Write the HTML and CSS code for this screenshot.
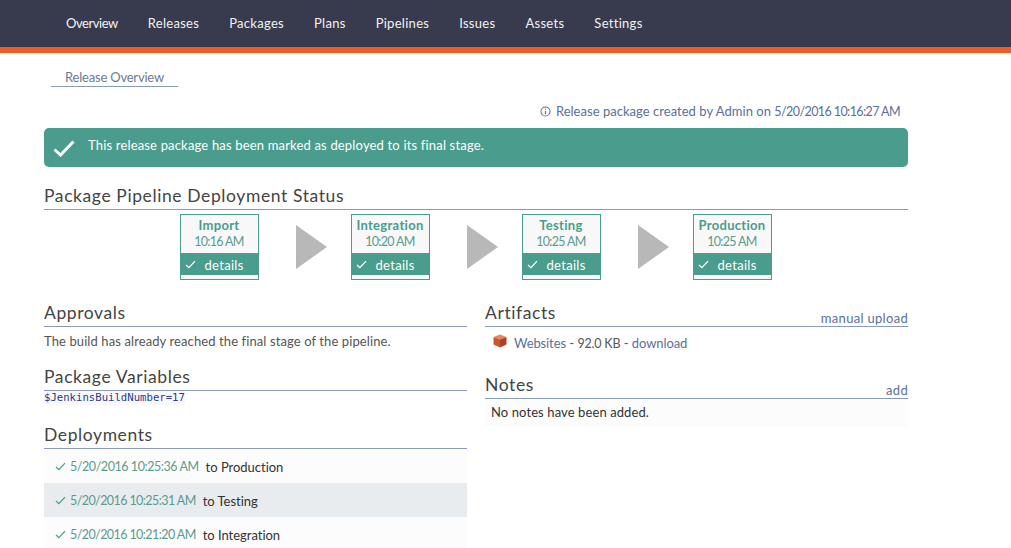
FILE: index.html
```html
<!DOCTYPE html>
<html lang="en">
<head>
<meta charset="utf-8">
<title>Release Overview</title>
<link rel="stylesheet" href="styles.css">
</head>
<body>
<nav class="topnav">
  <a href="#" class="nav-overview">Overview</a>
  <a href="#">Releases</a>
  <a href="#">Packages</a>
  <a href="#">Plans</a>
  <a href="#">Pipelines</a>
  <a href="#">Issues</a>
  <a href="#">Assets</a>
  <a href="#">Settings</a>
</nav>
<main class="page">
  <div class="tabs"><a href="#" class="tab">Release Overview</a></div>
  <p class="created">
    <svg class="info" viewBox="0 0 12 12" width="11" height="11"><circle cx="6" cy="6" r="5" fill="none" stroke="#5a6f99" stroke-width="1.1"/><path d="M6 3v1.2M6 5.4V9" stroke="#5a6f99" stroke-width="1.4" fill="none"/></svg>
    <span>Release package created by <a href="#">Admin</a> on <span class="date">5/20/2016 10:16:27 AM</span></span>
  </p>
  <div class="banner">
    <svg class="banner-check" viewBox="0 0 22 17" width="22" height="17"><path d="M1.5 9.5 L7.5 15 L20.5 1.5" fill="none" stroke="#fff" stroke-width="3"/></svg>
    <span>This release package has been marked as deployed to its final stage.</span>
  </div>
  <h2 class="heading pipeline-heading">Package Pipeline Deployment Status</h2>
  <div class="pipeline">
    <div class="stage">
      <div class="stage-name">Import</div><div class="stage-time">10:16 AM</div>
      <a href="#" class="stage-link"><svg viewBox="0 0 12 10" width="11" height="9"><path d="M1 5.5 L4.2 8.5 L11 1.2" fill="none" stroke="#fff" stroke-width="1.4"/></svg><span>details</span></a>
    </div>
    <div class="arrow"></div>
    <div class="stage">
      <div class="stage-name">Integration</div><div class="stage-time">10:20 AM</div>
      <a href="#" class="stage-link"><svg viewBox="0 0 12 10" width="11" height="9"><path d="M1 5.5 L4.2 8.5 L11 1.2" fill="none" stroke="#fff" stroke-width="1.4"/></svg><span>details</span></a>
    </div>
    <div class="arrow"></div>
    <div class="stage">
      <div class="stage-name">Testing</div><div class="stage-time">10:25 AM</div>
      <a href="#" class="stage-link"><svg viewBox="0 0 12 10" width="11" height="9"><path d="M1 5.5 L4.2 8.5 L11 1.2" fill="none" stroke="#fff" stroke-width="1.4"/></svg><span>details</span></a>
    </div>
    <div class="arrow"></div>
    <div class="stage">
      <div class="stage-name">Production</div><div class="stage-time">10:25 AM</div>
      <a href="#" class="stage-link"><svg viewBox="0 0 12 10" width="11" height="9"><path d="M1 5.5 L4.2 8.5 L11 1.2" fill="none" stroke="#fff" stroke-width="1.4"/></svg><span>details</span></a>
    </div>
  </div>
  <div class="columns">
    <section class="col">
      <h2 class="heading">Approvals</h2>
      <p class="approval-text">The build has already reached the final stage of the pipeline.</p>
      <h2 class="heading vars-heading">Package Variables</h2>
      <div class="vars"><code>$JenkinsBuildNumber=17</code></div>
      <h2 class="heading deploy-heading">Deployments</h2>
      <ul class="deploys">
        <li><svg viewBox="0 0 12 10" width="11" height="9"><path d="M1 5.5 L4.2 8.5 L11 1.2" fill="none" stroke="#4a9c8c" stroke-width="1.4"/></svg><a href="#" class="when date">5/20/2016 10:25:36 AM</a><span>to Production</span></li>
        <li class="alt"><svg viewBox="0 0 12 10" width="11" height="9"><path d="M1 5.5 L4.2 8.5 L11 1.2" fill="none" stroke="#4a9c8c" stroke-width="1.4"/></svg><a href="#" class="when date narrow">5/20/2016 10:25:31 AM</a><span>to Testing</span></li>
        <li><svg viewBox="0 0 12 10" width="11" height="9"><path d="M1 5.5 L4.2 8.5 L11 1.2" fill="none" stroke="#4a9c8c" stroke-width="1.4"/></svg><a href="#" class="when date narrow">5/20/2016 10:21:20 AM</a><span>to Integration</span></li>
      </ul>
    </section>
    <section class="col">
      <div class="heading heading-row"><h2>Artifacts</h2><a href="#">manual upload</a></div>
      <div class="artifact">
        <svg class="box" viewBox="0 0 14 14" width="14" height="14"><path d="M7 0.5 L13.5 3 L7 5.5 L0.5 3Z" fill="#e8875c"/><path d="M0.5 3 L7 5.5 V13.5 L0.5 10.5Z" fill="#c9562c"/><path d="M13.5 3 L7 5.5 V13.5 L13.5 10.5Z" fill="#a8441f"/></svg>
        <span><a href="#">Websites</a> - <span class="size">92.0 KB</span> - <a href="#">download</a></span>
      </div>
      <div class="heading heading-row notes-heading"><h2>Notes</h2><a href="#">add</a></div>
      <p class="notes">No notes have been added.</p>
    </section>
  </div>
</main>
</body>
</html>
```
FILE: styles.css
```css
* { box-sizing: border-box; }
html, body { margin: 0; height: 548px; overflow: hidden; }
body { background: #fff; color: #4a4a4a; font-family: "Lato", "Liberation Sans", sans-serif; font-size: 13px; letter-spacing: 0.1px; }
a { color: #5a6f99; text-decoration: none; }
h2, p, ul { margin: 0; padding: 0; }

.date { font-size: 12.5px; letter-spacing: -0.44px; }

.topnav { height: 53px; background: #383a4e; border-bottom: 6px solid #f15a29; display: flex; gap: 30px; padding: 16px 0 0 66px; letter-spacing: 0.29px; }
.topnav a { color: #f2f2f2; line-height: 15px; height: 15px; }
.topnav .nav-overview { letter-spacing: -0.45px; }

.page { padding: 0 103px 0 44px; }
.tabs { padding: 16px 0 0 7px; }
.tab { display: block; width: 127px; height: 18px; border-bottom: 1px solid #8a9bb5; padding: 1px 0 0 14px; line-height: 15px; letter-spacing: -0.2px; color: #6b7a99; }

.created { display: flex; justify-content: flex-end; align-items: center; gap: 5px; height: 16px; margin: 16px 8px 0 0; color: #5a6f99; letter-spacing: 0.03px; }
.created .info { flex: none; }
.created .date { letter-spacing: -0.58px; }

.banner { height: 39px; margin-top: 9px; background: #4a9c8c; border-radius: 5px; color: #fff; display: flex; align-items: center; padding: 0 0 6px 9px; gap: 13px; letter-spacing: 0.17px; }
.banner-check { flex: none; margin-top: 8px; }

.heading { border-bottom: 1px solid #8a9bb5; font-size: 17.5px; font-weight: 400; line-height: 24px; height: 26px; color: #444; letter-spacing: 0.6px; }
.pipeline-heading { margin-top: 17px; }

.pipeline { display: flex; justify-content: center; align-items: center; margin-top: 4px; padding-right: 1px; letter-spacing: 0.3px; }
.stage { width: 79px; height: 66px; border: 1px solid #4a9c8c; background: #f8f8f8; text-align: center; }
.stage-name { color: #4a9c8c; font-weight: 700; line-height: 18px; padding-top: 1px; height: 18px; }
.stage-time { color: #5c9a8d; font-size: 12.5px; letter-spacing: -0.68px; line-height: 18px; height: 20px; }
.stage-link { display: flex; align-items: center; height: 22px; background: #4a9c8c; color: #fff; padding: 1px 0 0 4px; gap: 9px; }
.arrow { width: 31px; height: 44px; margin: 0 24px 0 37px; border-left: 31px solid #b8b8b8; border-top: 22px solid transparent; border-bottom: 22px solid transparent; }

.columns { display: flex; gap: 18px; margin-top: 21px; }
.col { width: 423px; }
.col .heading { line-height: 23px; }
.heading-row { display: flex; justify-content: space-between; align-items: flex-end; }
.heading-row h2 { font: inherit; letter-spacing: inherit; align-self: flex-start; }
.heading-row a { font-size: 13px; letter-spacing: 0.3px; line-height: 16px; }

.approval-text { line-height: 16px; margin-top: 6px; color: #555; }
.vars-heading { margin-top: 16px; }
.vars { line-height: 14px; height: 14px; }
.vars code { display: inline-block; font-family: "DejaVu Sans Mono", monospace; font-size: 10.65px; line-height: 14px; letter-spacing: 0; color: #2b3a8c; background: #f8f8f8; vertical-align: top; }
.deploy-heading { margin-top: 18px; }
.deploys { list-style: none; }
.deploys li { height: 34px; background: #fcfcfc; display: flex; align-items: center; padding: 1px 0 0 11px; color: #333; letter-spacing: -0.02px; }
.deploys li.alt { background: #e8ecee; }
.deploys svg { flex: none; margin-right: 4px; }
.deploys .when { color: #5c9a8d; margin-right: 7px; }
.deploys .narrow { letter-spacing: -0.58px; }

.artifact { display: flex; align-items: center; gap: 7px; padding-left: 8px; height: 32px; color: #555; letter-spacing: 0; }
.artifact a { letter-spacing: -0.1px; }
.artifact .box { margin-top: -4px; flex: none; }
.size { font-size: 12.5px; letter-spacing: -0.2px; }
.notes-heading { margin-top: 14px; }
.notes { height: 28px; line-height: 27px; padding-left: 6px; background: #fcfcfc; color: #333; }
```
